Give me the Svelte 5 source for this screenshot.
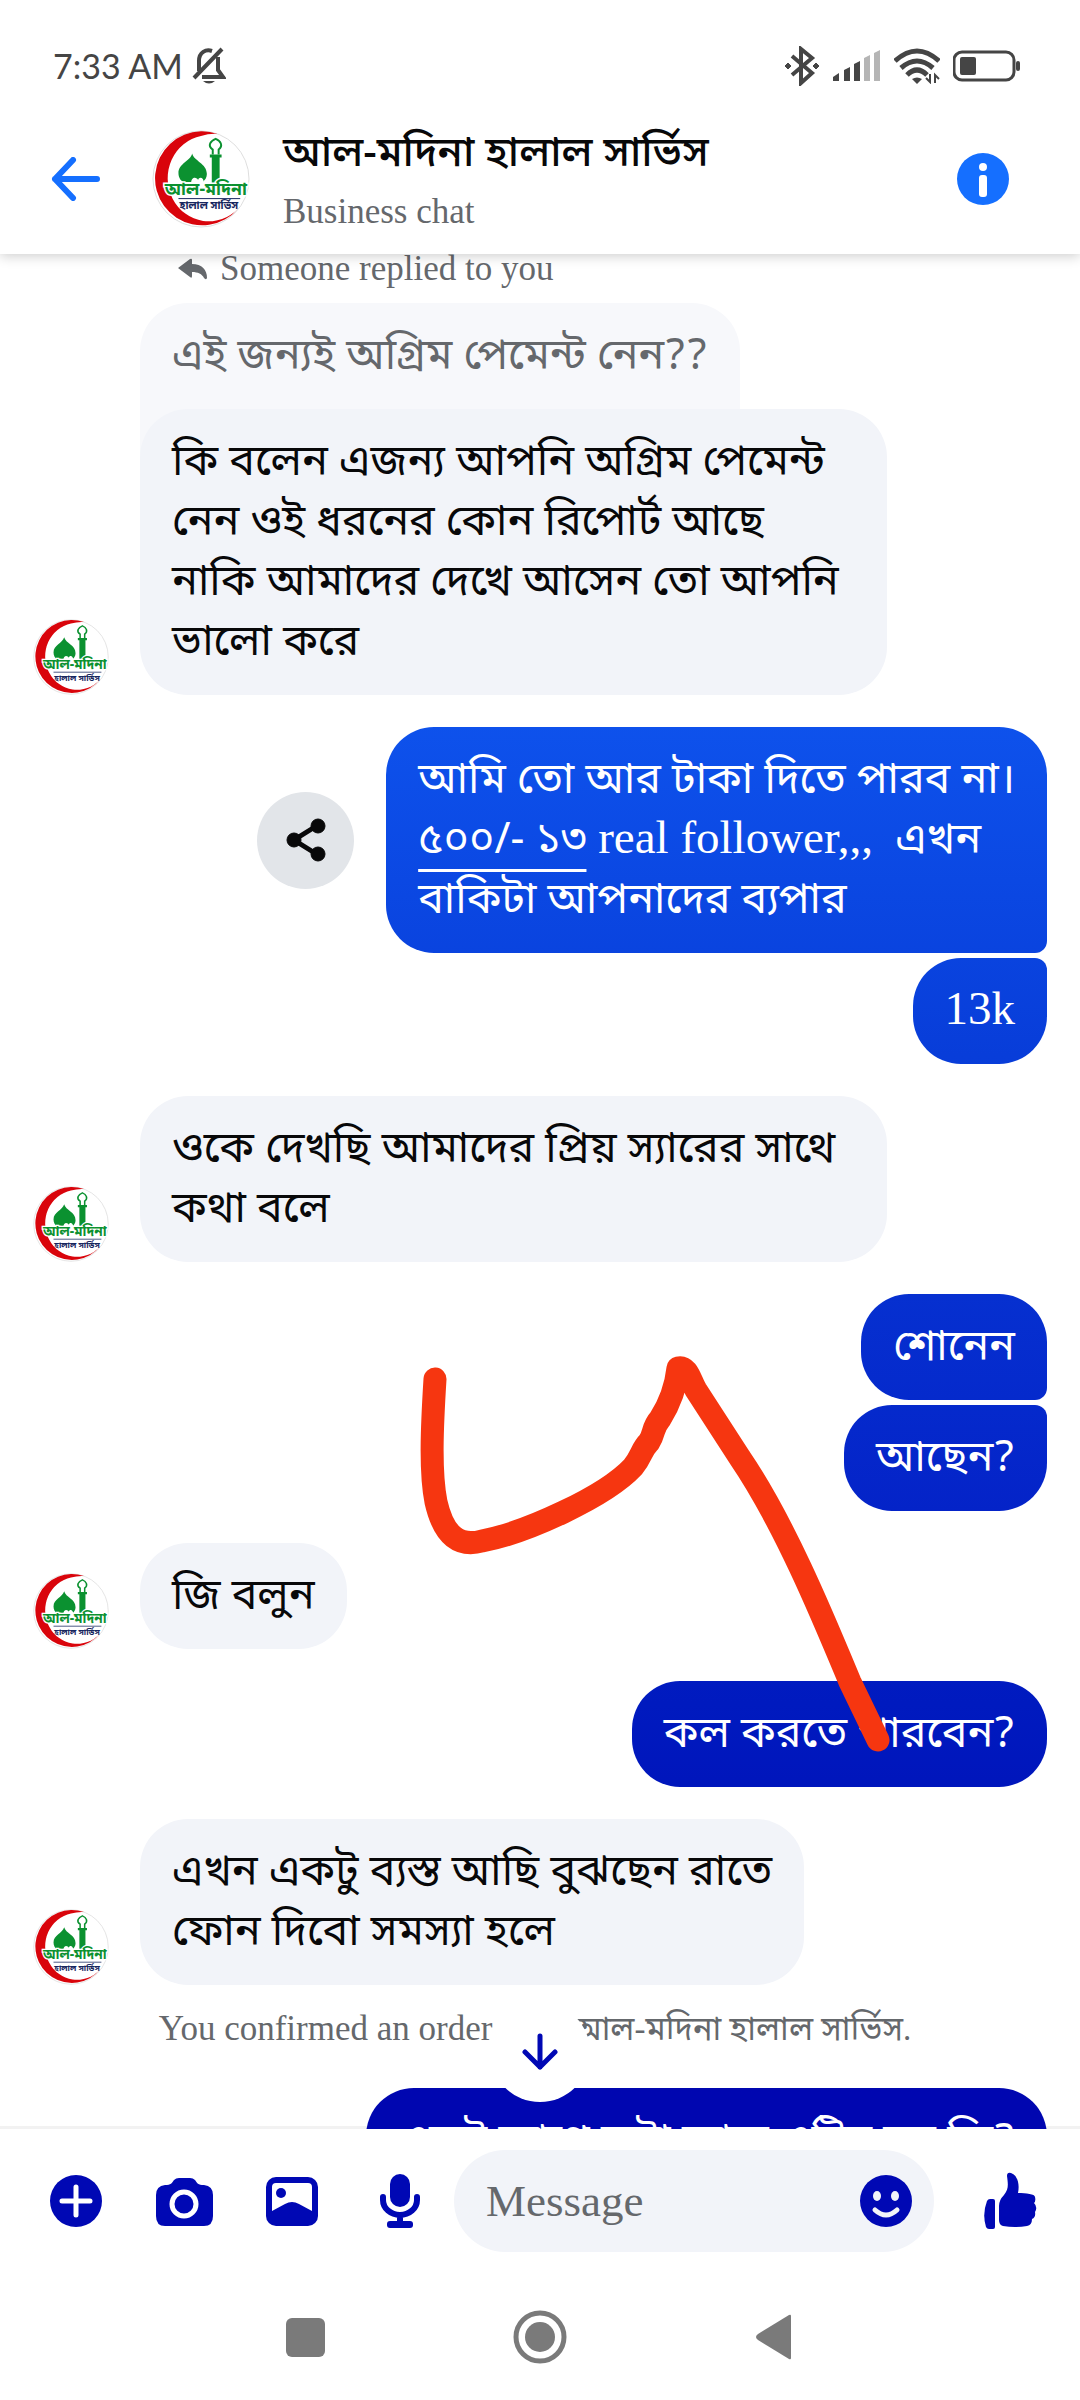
<script>
    const pageName = 'আল-মদিনা হালাল সার্ভিস';

    // consecutive messages of one sender form a group
    const groups = [
        {
            from: 'page',
            quote: 'এই জন্যই অগ্রিম পেমেন্ট নেন??',
            messages: [{ text: 'কি বলেন এজন্য আপনি অগ্রিম পেমেন্ট নেন ওই ধরনের কোন রিপোর্ট আছে নাকি আমাদের দেখে আসেন তো আপনি ভালো করে' }]
        },
        {
            from: 'me',
            messages: [
                { link: '৫০০/- ১৩', before: 'আমি তো আর টাকা দিতে পারব না।\n', latin: ' real follower,,,', text: '  এখন\nবাকিটা আপনাদের ব্যপার', share: true },
                { latin: '13k' }
            ]
        },
        { from: 'page', messages: [{ text: 'ওকে দেখছি আমাদের প্রিয় স্যারের সাথে কথা বলে' }] },
        { from: 'me', messages: [{ text: 'শোনেন' }, { text: 'আছেন?' }] },
        { from: 'page', messages: [{ text: 'জি বলুন' }] },
        { from: 'me', messages: [{ text: 'কল করতে পারবেন?' }] },
        { from: 'page', messages: [{ text: 'এখন একটু ব্যস্ত আছি বুঝছেন রাতে\nফোন দিবো সমস্যা হলে' }] }
    ];

    let draft = '';
</script>

{#snippet logo()}
    <svg class="logo" viewBox="0 0 100 100" role="img" aria-label={pageName}>
        <circle cx="50" cy="50" r="49" fill="#fff" stroke="#ddd" />
        <path d="M67 4A48 48 0 1 0 88 80A42 44 0 1 1 50 6A49 49 0 0 1 67 4Z" fill="#d9040b" />
        <path d="M41 24c2 8 15 10 15 21 0 4-2 6-4 8H32c-3-1-5-5-5-9 0-10 12-12 14-20ZM61 31h8v23h-8ZM59 25h12v3H59ZM61 28h8v4h-8Z" fill="#0b9130" />
        <path d="M62 25v-5c-6-4-2-9 3-11 5 2 8 7 3 11v5" fill="none" stroke="#0b9130" stroke-width="2" />
        <path d="M40 54c0-7 6-6 7-3 1-4 6-3 6 3Z" fill="#fff" />
        <text class="logo-name" x="55" y="66" text-anchor="middle">আল-মদিনা</text>
        <path d="M27 70H90" stroke="#17265e" stroke-width="1" />
        <text class="logo-sub" x="58" y="81" text-anchor="middle">হালাল সার্ভিস</text>
    </svg>
{/snippet}

<div class="app">
    <div class="status">
        <span class="time">7:33 AM</span>
        <svg class="bell" width="34" height="38" viewBox="0 0 34 38" fill="none" stroke="#454545" stroke-width="4">
            <path d="M7 24V14C7 5 14 2 20 4M26 10v13l5 7H10M2 31L30 2" />
            <path d="M11 34h12q-6 5-12 0Z" fill="#454545" stroke="none" />
        </svg>
        <svg width="36" height="40" viewBox="0 0 36 40" fill="none" stroke="#454545" stroke-width="4">
            <path d="M8 10l20 17-11 10V3l11 9L8 29" />
            <path d="M4 17l3 3-3 3-3-3ZM32 17l3 3-3 3-3-3Z" fill="#454545" stroke-width="1" />
        </svg>
        <svg width="48" height="32" viewBox="0 0 48 32">
            <path d="M0 31v-4l6-4v8ZM11 31V20l6-3v14ZM21 31V14l6-3v20Z" fill="#454545" />
            <path d="M31 31V8l6-3v26ZM41 31V3l6-3v31Z" fill="#b5b5b5" />
        </svg>
        <svg width="46" height="36" viewBox="0 0 46 36" fill="none" stroke="#454545" stroke-width="5">
            <path d="M1 13Q23-7 45 13M7 20Q23 6 39 20M13 27Q23 17 33 27" />
            <path d="M18 31q5-3 10 0l-5 5Z" fill="#454545" stroke="none" />
            <path d="M36 26v8l-4-4M41 35v-8l4 4" stroke-width="2" />
        </svg>
        <svg width="68" height="32" viewBox="0 0 68 32">
            <rect x="1" y="2" width="60" height="28" rx="8" fill="none" stroke="#454545" stroke-width="3" />
            <rect x="7" y="7" width="16" height="18" rx="2" fill="#454545" />
            <rect x="63" y="11" width="4" height="10" rx="2" fill="#454545" />
        </svg>
    </div>

    <header>
        <button type="button" aria-label="Back">
            <svg width="50" height="44" viewBox="0 0 50 44" fill="none" stroke="#156fff" stroke-width="6" stroke-linecap="round" stroke-linejoin="round">
                <path d="M46 22H4M22 3L4 22l18 19" />
            </svg>
        </button>
        <div class="avatar big">{@render logo()}</div>
        <div class="who">
            <h1>{pageName}</h1>
            <p>Business chat</p>
        </div>
        <button type="button" aria-label="Info">
            <svg width="54" height="54" viewBox="0 0 54 54">
                <circle cx="27" cy="27" r="26" fill="#156fff" />
                <circle cx="27" cy="15" r="4" fill="#fff" />
                <rect x="23" y="23" width="8" height="22" rx="3" fill="#fff" />
            </svg>
        </button>
    </header>

    <main>
        <p class="replied">
            <svg width="30" height="22" viewBox="0 0 30 22"><path d="M0 10L12 1q2-1 2 1v4c10 0 15 6 15 14-1 2-2 1-3 0-2-4-6-6-12-6v4q0 3-2 1Z" fill="#65686c" /></svg>
            Someone replied to you
        </p>

        {#each groups as group}
            <section class={group.from}>
                {#if group.from === 'page'}
                    <div class="avatar">{@render logo()}</div>
                {/if}
                <div class="stack">
                    {#if group.quote}
                        <div class="bubble quote">{group.quote}</div>
                    {/if}
                    {#each group.messages as m}
                        <div class="row">
                            {#if m.share}
                                <button type="button" class="share" aria-label="Share">
                                    <svg width="40" height="44" viewBox="0 0 40 44" stroke="#080809" fill="#080809">
                                        <path d="M32 7L8 22l24 15" fill="none" stroke-width="5" />
                                        <circle cx="32" cy="8" r="7" /><circle cx="8" cy="22" r="7" /><circle cx="32" cy="36" r="7" />
                                    </svg>
                                </button>
                            {/if}
                            <div class="bubble">{m.before ?? ''}{#if m.link}<a href="tel:500-13">{m.link}</a>{/if}{#if m.latin}<span class="latin">{m.latin}</span>{/if}{m.text ?? ''}</div>
                        </div>
                    {/each}
                </div>
            </section>
        {/each}

        <p class="notice">You confirmed an order with <span>{pageName}.</span></p>

        <section class="me">
            <div class="stack">
                <div class="row"><div class="bubble">একটু আগে কটা আজ এটির নয় কি?</div></div>
            </div>
        </section>

        <button type="button" class="to-bottom" aria-label="Scroll to bottom">
            <svg width="36" height="38" viewBox="0 0 36 38" fill="none" stroke="#0008b4" stroke-width="5" stroke-linecap="round" stroke-linejoin="round">
                <path d="M18 3v31M3 19l15 15 15-15" />
            </svg>
        </button>

        <svg class="scribble" width="480" height="420" viewBox="0 0 480 420" fill="none" stroke="#f63610" stroke-width="23" stroke-linecap="round" stroke-linejoin="round">
            <path d="M35 29C32 77 30 122 36 152C44 187 60 197 82 191C125 183 205 147 233 117C242 106 241 100 249 92C255 83 252 78 260 69C274 47 277 27 278 18C288 16 290 30 296 40L340 108C385 174 425 272 450 332L478 390" />
        </svg>
    </main>

    <form class="composer" on:submit|preventDefault={() => (draft = '')}>
        <button type="button" aria-label="More actions">
            <svg width="54" height="54" viewBox="0 0 54 54">
                <circle cx="27" cy="27" r="26" fill="#0008b4" />
                <path d="M27 13v28M13 27h28" stroke="#fff" stroke-width="5" stroke-linecap="round" />
            </svg>
        </button>
        <button type="button" aria-label="Camera">
            <svg width="58" height="54" viewBox="0 0 58 54">
                <path d="M10 11c6 0 7-2 9-5q2-2 5-2h11q3 0 5 2c2 3 3 5 9 5q9 1 9 10v21q0 10-9 10H10Q1 52 1 42V21q0-9 9-10Z" fill="#0008b4" />
                <circle cx="29" cy="30" r="12" fill="none" stroke="#fff" stroke-width="5" />
            </svg>
        </button>
        <button type="button" aria-label="Gallery">
            <svg width="54" height="54" viewBox="0 0 54 54">
                <rect x="1" y="3" width="52" height="49" rx="10" fill="#0008b4" />
                <path d="M7 13q0-4 4-4h32q4 0 4 4v24l-13-7q-7-4-14 0L7 37Z" fill="#fff" />
                <circle cx="16" cy="19" r="5" fill="#0008b4" />
            </svg>
        </button>
        <button type="button" aria-label="Voice message">
            <svg width="42" height="54" viewBox="0 0 42 54" fill="#0008b4">
                <rect x="11" y="0" width="20" height="33" rx="10" />
                <path d="M4 23v3a17 15 0 0 0 34 0v-3M21 41v8" fill="none" stroke="#0008b4" stroke-width="6" stroke-linecap="round" />
                <rect x="8" y="47" width="26" height="7" rx="3" />
            </svg>
        </button>
        <div class="field">
            <input type="text" aria-label="Message" placeholder="Message" bind:value={draft} />
            <button type="button" aria-label="Emoji">
                <svg width="54" height="54" viewBox="0 0 54 54">
                    <circle cx="27" cy="27" r="26" fill="#0008b4" />
                    <ellipse cx="18" cy="22" rx="4" ry="5" fill="#f2f4f9" />
                    <ellipse cx="36" cy="22" rx="4" ry="5" fill="#f2f4f9" />
                    <path d="M16 36q11 10 22 0" fill="none" stroke="#f2f4f9" stroke-width="5" stroke-linecap="round" />
                </svg>
            </button>
        </div>
        <button type="button" aria-label="Like">
            <svg width="54" height="58" viewBox="0 0 54 58" fill="#0008b4">
                <path d="M4 29q1-2 3-2h3q2 0 2 2v26q0 2-2 2H6q-2 0-3-2Q-1 42 4 29Z" />
                <path d="M16 34q0-6 5-11c5-6 4-11 3-19q0-4 4-3c6 2 9 10 7 20 8 0 17 1 17 4q1 4-1 6 4 4 1 9 1 5-3 7 0 6-5 7-12 2-24 0-4-1-4-6Z" />
            </svg>
        </button>
    </form>

    <nav>
        <button type="button" aria-label="Recent apps">
            <svg width="54" height="54" viewBox="0 0 54 54"><rect x="7" y="8" width="39" height="39" rx="6" fill="#7a7a7a" /></svg>
        </button>
        <button type="button" aria-label="Home">
            <svg width="54" height="54" viewBox="0 0 54 54">
                <circle cx="27" cy="27" r="24" fill="none" stroke="#7a7a7a" stroke-width="5" />
                <circle cx="27" cy="27" r="15" fill="#7a7a7a" />
            </svg>
        </button>
        <button type="button" aria-label="System back">
            <svg width="54" height="54" viewBox="0 0 54 54"><path d="M42 5q2-1 2 1v42q0 2-2 1L11 30q-4-3 0-6Z" fill="#7a7a7a" /></svg>
        </button>
    </nav>
</div>

<style>
    :global(body) { margin: 0; background: #fff; }
    .app {
        height: 100vh; display: flex; flex-direction: column; overflow: hidden; color: #080809;
        font-family: "Liberation Serif", "Noto Sans Bengali", "Noto Sans", serif;
    }
    p, h1 { margin: 0; }
    svg { display: block; flex: none; }
    button { display: grid; place-items: center; flex: none; padding: 0; border: 0; background: none; cursor: pointer; }

    .status { display: flex; flex: none; align-items: center; gap: 13px; height: 104px; padding: 28px 59px 0 53px; box-sizing: border-box; }
    .time { font-family: Lato, sans-serif; font-size: 34px; line-height: 40px; color: #454545; }
    .status .bell { margin: 0 auto 0 -4px; }

    header {
        position: relative; z-index: 1; display: flex; flex: none; align-items: center; height: 150px;
        padding: 0 70px 0 51px; box-shadow: 0 2px 12px rgba(0, 0, 0, .2); clip-path: inset(0 0 -20px); background: #fff;
    }
    .avatar { flex: none; width: 76px; height: 76px; }
    .avatar.big { width: 98px; height: 98px; margin-left: 51px; }
    .logo { width: 100%; height: 100%; }
    .logo-name { font: bold 18px "Noto Sans Bengali", "Noto Sans", sans-serif; fill: #0b9130; stroke: #fff; stroke-width: 3px; paint-order: stroke; }
    .logo-sub { font: bold 11px "Noto Sans Bengali", "Noto Sans", sans-serif; fill: #17265e; }
    .who { flex: 1; margin-left: 33px; padding-top: 6px; }
    h1 { font-family: "Noto Sans Bengali", "Noto Sans", sans-serif; font-size: 42px; line-height: 60px; font-weight: 500; }
    .who p { font-size: 35px; line-height: 54px; color: #65686c; }

    main { position: relative; flex: 1; min-height: 0; overflow: hidden; box-shadow: inset 0 -3px #f2f2f2; }
    .replied { display: flex; align-items: center; gap: 12px; height: 30px; margin: 0 0 19px 178px; font-size: 35px; color: #65686c; }
    section { display: flex; align-items: flex-end; gap: 31px; padding: 0 33px; margin-bottom: 32px; }
    .stack { flex: 1; display: flex; flex-direction: column; gap: 5px; align-items: flex-start; }
    .me .stack { align-items: flex-end; }
    .row { display: flex; align-items: center; gap: 32px; max-width: 747px; }
    .me .row { max-width: none; }
    .bubble {
        padding: 26px 32px 20px; border-radius: 48px; background: #f2f4f9; white-space: pre-wrap;
        font-family: "Noto Sans Bengali", "Noto Sans", sans-serif; font-size: 43px; line-height: 60px;
    }
    .quote { margin-bottom: -53px; padding-bottom: 68px; border-radius: 48px 48px 0 0; background: #f7f8fb; color: #65686c; }
    .me .bubble {
        color: #fff;
        background: linear-gradient(#1465ff 10%, #0e52ec 30%, #083dd9 44%, #0630d0 54%, #0423c8 63%, #001abf 71%, #0006b0 87%) fixed;
    }
    .me .row:not(:last-child) .bubble { border-bottom-right-radius: 12px; }
    .me .row:not(:first-child) .bubble { border-top-right-radius: 12px; }
    .bubble a { color: inherit; text-decoration: underline 3px; text-underline-offset: 16px; }
    .latin { font-family: "Liberation Serif", serif; font-size: 47px; line-height: 0; }
    .share { width: 97px; height: 97px; border-radius: 50%; background: #e2e5e9; }
    .notice { margin: -8px 0 39px; padding: 0 20px 0 10px; font-size: 35px; line-height: 40px; text-align: center; color: #65686c; }
    .notice span { font-size: 33px; line-height: 0; }

    /* both float over the message list */
    .to-bottom { position: absolute; left: 50%; bottom: 27px; width: 100px; height: 100px; margin-left: -50px; border-radius: 50%; background: #fff; }
    .scribble { position: absolute; left: 400px; top: 1096px; overflow: visible; pointer-events: none; }

    .composer { display: flex; flex: none; align-items: center; gap: 52px; height: 144px; padding: 0 42px 0 48px; }
    .composer > button { width: 56px; height: 102px; justify-content: center; }
    .field { flex: 1; display: flex; align-items: center; height: 102px; margin: 0 -4px 0 -26px; padding: 0 21px 0 32px; box-sizing: border-box; border-radius: 51px; background: #f2f4f9; min-width: 0; }
    .field input { flex: 1; min-width: 0; padding: 0; border: 0; outline: 0; background: none; font: 45px "Liberation Serif", serif; }
    .field input::placeholder { color: #65686c; opacity: 1; }
    nav { display: flex; flex: none; justify-content: center; gap: 180px; height: 127px; align-items: center; }
</style>
